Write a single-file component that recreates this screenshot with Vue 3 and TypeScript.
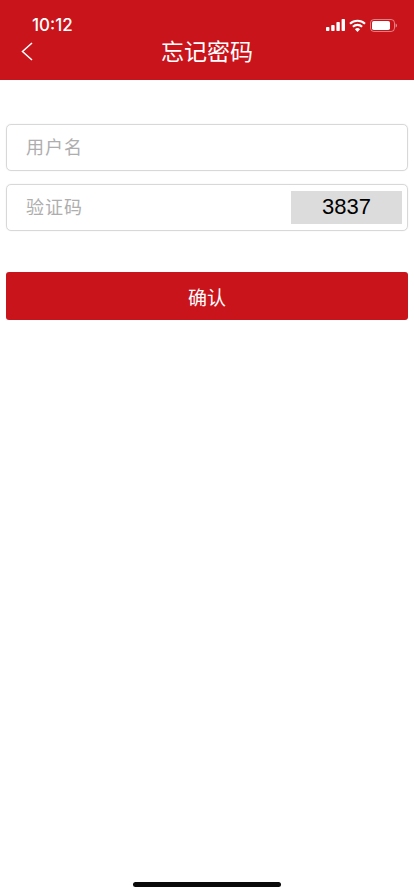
<script setup lang="ts">
const title = '忘记密码'
</script>

<template>
  <div class="page">
    <header class="header">
      <div class="status">
        <span class="time">10:12</span>
        <div class="status-icons">
          <svg class="signal" width="19" height="12" viewBox="0 0 19 12">
            <rect x="0" y="8" width="3.4" height="4" rx="0.8" fill="#fff" />
            <rect x="5.2" y="6" width="3.4" height="6" rx="0.8" fill="#fff" />
            <rect x="10.4" y="3" width="3.4" height="9" rx="0.8" fill="#fff" />
            <rect x="15.6" y="0" width="3.4" height="12" rx="0.8" fill="#fff" />
          </svg>
          <svg class="wifi" width="17" height="13" viewBox="0 0 17 13">
            <path d="M1 4.8 A10.8 10.8 0 0 1 16 4.8" fill="none" stroke="#fff" stroke-width="2.1" />
            <path d="M3.9 7.7 A6.6 6.6 0 0 1 13.1 7.7" fill="none" stroke="#fff" stroke-width="2.1" />
            <path d="M8.5 13 L5.9 10.2 A3.7 3.7 0 0 1 11.1 10.2 Z" fill="#fff" />
          </svg>
          <svg class="battery" width="27" height="13" viewBox="0 0 27 13">
            <rect x="0.5" y="0.5" width="24" height="12" rx="3.4" fill="none" stroke="#fff" stroke-opacity="0.45" />
            <rect x="2" y="2" width="18" height="9" rx="1.8" fill="#fff" />
            <path d="M25.6 4.5 C26.4 4.8 27 5.6 27 6.5 C27 7.4 26.4 8.2 25.6 8.5 Z" fill="#fff" fill-opacity="0.5" />
          </svg>
        </div>
      </div>
      <div class="nav">
        <svg class="back" width="12" height="20" viewBox="0 0 12 20">
          <path d="M11 1 L1.5 9.5 L11 18" fill="none" stroke="#fff" stroke-width="1.5" />
        </svg>
        <h1 class="title">{{ title }}</h1>
      </div>
    </header>

    <main class="form">
      <div class="field">
        <span class="placeholder">用户名</span>
      </div>
      <div class="field code-field">
        <span class="placeholder">验证码</span>
        <span class="code">3837</span>
      </div>
      <button class="confirm" type="button">确认</button>
    </main>

    <div class="home-bar"></div>
  </div>
</template>

<style>
html, body { margin: 0; padding: 0; background: #fff; }
</style>

<style scoped>
.page {
  width: 414px;
  height: 896px;
  display: flex;
  flex-direction: column;
  background: #fff;
  font-family: "Liberation Sans", "Noto Sans CJK SC", sans-serif;
  position: relative;
  overflow: hidden;
}
.header {
  height: 80px;
  background: #c9141c;
  color: #fff;
  padding: 16px 0 0;
  box-sizing: border-box;
  flex: none;
}
.status {
  height: 18px;
  display: flex;
  align-items: center;
  justify-content: space-between;
  padding: 0 17px 0 32px;
}
.time {
  font-family: Inter, "Liberation Sans", sans-serif;
  font-size: 17px;
  font-weight: 500;
  line-height: 18px;
}
.status-icons {
  display: flex;
  align-items: center;
  gap: 4px;
}
.nav {
  height: 36px;
  position: relative;
  display: flex;
  align-items: center;
  justify-content: center;
}
.back {
  position: absolute;
  left: 21px;
  top: 8px;
}
.title {
  margin: 0;
  font-size: 23px;
  font-weight: 400;
  line-height: 36px;
  letter-spacing: 0;
}
.form {
  padding: 44px 6px 0;
  display: flex;
  flex-direction: column;
}
.field {
  height: 47px;
  box-sizing: border-box;
  border: 1px solid #d8d8d8;
  border-radius: 5px;
  box-shadow: 0 0 1px #d8d8d8;
  display: flex;
  align-items: center;
  justify-content: space-between;
  padding: 0 5px 0 19px;
  margin-bottom: 13px;
}
.placeholder {
  font-size: 18px;
  letter-spacing: 1px;
  color: #aeaeae;
  line-height: 20px;
}
.code {
  width: 111px;
  height: 33px;
  background: #dcdcdc;
  color: #000;
  font-size: 22px;
  line-height: 32px;
  text-align: center;
}
.confirm {
  margin-top: 28px;
  height: 48px;
  border: none;
  border-radius: 3px;
  background: #c9141c;
  color: #fff;
  font-family: inherit;
  font-size: 19px;
  padding: 0;
}
.home-bar {
  position: absolute;
  left: 133px;
  top: 882px;
  width: 148px;
  height: 5px;
  border-radius: 3px;
  background: #0a0a0a;
}
</style>
